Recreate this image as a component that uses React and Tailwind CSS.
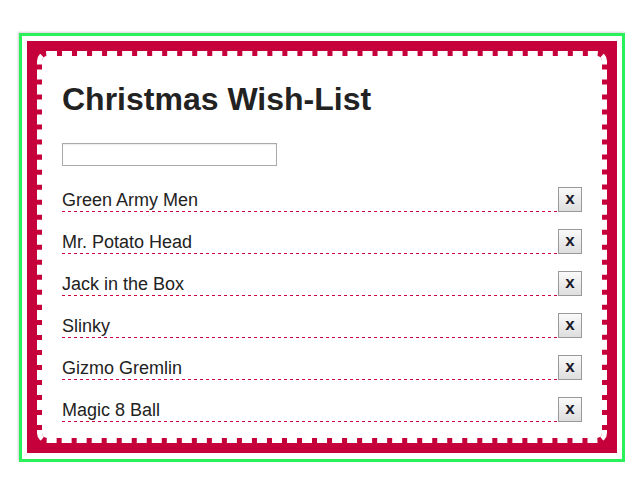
import React, { useState } from 'react';

const regalos = ['Green Army Men', 'Mr. Potato Head', 'Jack in the Box', 'Slinky', 'Gizmo Gremlin', 'Magic 8 Ball'];

export default function App() {
  const [lista, setLista] = useState(regalos);
  const [nuevo, setNuevo] = useState('');

  const agregar = (e) => {
    e.preventDefault();
    if (!nuevo.trim()) return;
    setLista([...lista, nuevo.trim()]);
    setNuevo('');
  };

  return (
    <div className="min-h-[502px] bg-white pt-[33px] pl-[19px] font-['Liberation_Sans',Arial,sans-serif]">
      <div className="w-[606px] h-[429px] border-[3px] border-[#2af05a] px-[5px] pt-[5px] pb-[6px] shadow-[-1px_-1px_2px_rgba(0,0,0,0.18)]">
        <div className="h-full bg-[#c5003a] p-[10px]">
          <div className="h-full bg-white bg-clip-padding border-[5px] border-dashed border-white rounded-[10px] px-[20px] pt-[25px]">
            <h1 className="text-[32px] leading-[37px] font-bold text-[#222]">Christmas Wish-List</h1>
            <form onSubmit={agregar} className="mt-[25px]">
              <input
                type="text"
                value={nuevo}
                onChange={(e) => setNuevo(e.target.value)}
                className="block w-[215px] h-[23px] border border-[#aaa] shadow-[inset_0_1px_1px_rgba(0,0,0,0.08)] px-1 text-[13px] outline-none"
              />
            </form>
            <ul className="mt-[21px] flex flex-col gap-[17px]">
              {lista.map((item, i) => (
                <li key={i} className="flex items-end h-[25px]">
                  <div className="flex-1 flex flex-col">
                    <span className="text-[18px] leading-[21px] text-[#222]">{item}</span>
                    <div className="w-full h-[1px] bg-[repeating-linear-gradient(to_right,#d0003f_0_3px,transparent_3px_6px)]" />
                  </div>
                  <button
                    onClick={() => setLista(lista.filter((_, j) => j !== i))}
                    className="w-[24px] h-[25px] border border-[#999] bg-gradient-to-b from-[#fafafa] to-[#dedede] text-[17px] leading-none font-bold text-[#1a1a2a] flex items-center justify-center pb-[3px]"
                  >
                    x
                  </button>
                </li>
              ))}
            </ul>
          </div>
        </div>
      </div>
    </div>
  );
}
